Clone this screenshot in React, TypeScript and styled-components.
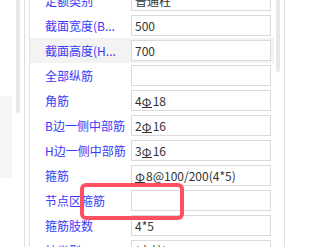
import styled, { createGlobalStyle } from 'styled-components';

const GlobalStyle = createGlobalStyle`
  html, body {
    margin: 0;
    padding: 0;
    background: #fff;
  }
  body {
    width: 287px;
    height: 247px;
    overflow: hidden;
    font-family: "Noto Sans CJK SC", "Noto Sans", sans-serif;
  }
`;

const Frame = styled.div`
  position: relative;
  display: flex;
  width: 287px;
  height: 247px;
  overflow: hidden;
`;

const SidePane = styled.div`
  display: flex;
  width: 24px;
  flex-shrink: 0;
  border-right: 1px solid #dedede;
`;

const SideBlock = styled.div`
  width: 12px;
  height: 82px;
  margin-top: 96px;
  background: #f4f5f7;
`;

const Thumb = styled.div<{ $h: number; $left: number }>`
  width: 4px;
  height: ${(p) => p.$h}px;
  margin-left: ${(p) => p.$left}px;
  background: #e8e8e8;
  border-radius: 0 0 2px 2px;
  flex-shrink: 0;
`;

const GridPanel = styled.div`
  display: flex;
  margin-left: 4px;
  border-left: 1px solid #e4e4e4;
  border-right: 1px solid #e0e0e0;
  width: 254px;
  flex-shrink: 0;
`;

const RowList = styled.div`
  width: 244px;
  margin-top: -12px;
`;

const Row = styled.div<{ $active?: boolean }>`
  display: flex;
  align-items: center;
  height: 25px;
  background: ${(p) => (p.$active ? '#f3f3f3' : 'transparent')};
`;

const Label = styled.div`
  width: 86px;
  padding-left: 15px;
  font-size: 12px;
  color: #3a3af6;
  white-space: nowrap;
  overflow: hidden;
`;

const ValueBox = styled.div`
  box-sizing: border-box;
  width: 140px;
  height: 21px;
  padding: 0 3px;
  display: flex;
  align-items: center;
  border: 1px solid #dadada;
  background: #fff;
  font-size: 12px;
  color: #333;
  white-space: nowrap;
  overflow: hidden;
`;

/* HRB400 steel grade mark: Φ with a base bar */
const Rebar = styled.span`
  position: relative;
  display: inline-block;
  width: 10px;
  text-align: center;
  font-size: 12px;
  line-height: 12px;
  margin: 0 1px 0 0;
  vertical-align: -1px;
  &::after {
    content: '';
    position: absolute;
    left: 0;
    right: 0;
    bottom: 0;
    height: 1px;
    background: currentColor;
  }
`;

const Callout = styled.div`
  position: absolute;
  left: 80px;
  top: 183px;
  width: 104px;
  height: 37px;
  box-sizing: border-box;
  border: 4px solid #fe5062;
  border-radius: 6px;
`;

type Item = { label: string; value?: string; active?: boolean };

const items: Item[] = [
  { label: '定额类别', value: '普通柱' },
  { label: '截面宽度(B...', value: '500' },
  { label: '截面高度(H...', value: '700', active: true },
  { label: '全部纵筋' },
  { label: '角筋', value: '4#18' },
  { label: 'B边一侧中部筋', value: '2#16' },
  { label: 'H边一侧中部筋', value: '3#16' },
  { label: '箍筋', value: '#8@100/200(4*5)' },
  { label: '节点区箍筋' },
  { label: '箍筋肢数', value: '4*5' },
  { label: '柱类型', value: '(中柱)' },
];

function renderValue(v?: string) {
  if (!v) return null;
  const parts = v.split('#');
  return parts.map((part, i) => (
    <span key={i}>
      {i > 0 && <Rebar>Φ</Rebar>}
      {part}
    </span>
  ));
}

export default function App() {
  return (
    <>
      <GlobalStyle />
      <Frame>
        <SidePane>
          <SideBlock />
          <Thumb $h={113} $left={4} />
        </SidePane>
        <GridPanel>
          <RowList>
            {items.map((it) => (
              <Row key={it.label} $active={it.active}>
                <Label>{it.label}</Label>
                <ValueBox>{renderValue(it.value)}</ValueBox>
              </Row>
            ))}
          </RowList>
          <Thumb $h={72} $left={2} />
        </GridPanel>
        <Callout />
      </Frame>
    </>
  );
}
